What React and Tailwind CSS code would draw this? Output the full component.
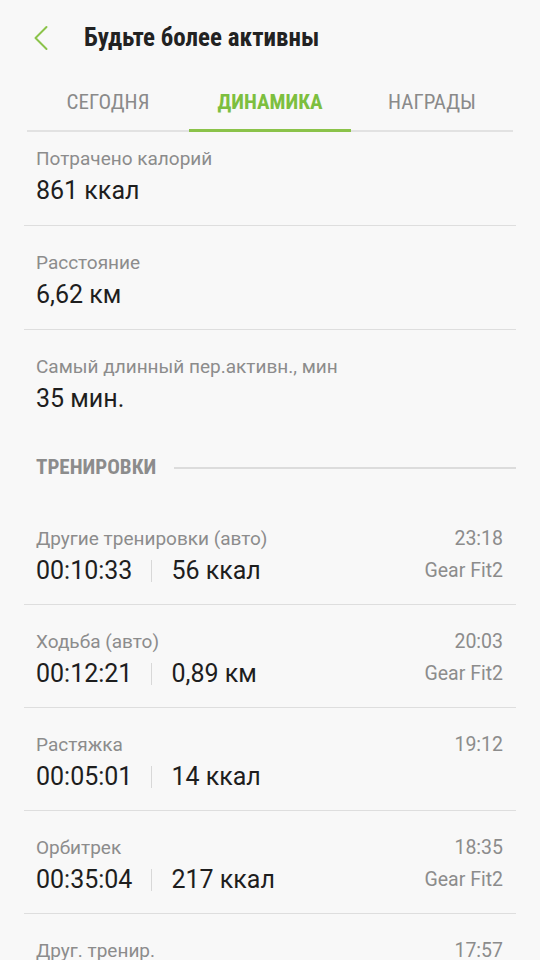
import { ChevronLeft } from 'lucide-react';

const stats = [
  { label: 'Потрачено калорий', value: '861 ккал' },
  { label: 'Расстояние', value: '6,62 км' },
  { label: 'Самый длинный пер.активн., мин', value: '35 мин.' },
];

// last entry is cut by the screen edge, only its first line shows
const workouts = [
  { name: 'Другие тренировки (авто)', time: '23:18', duration: '00:10:33', amount: '56 ккал', device: 'Gear Fit2' },
  { name: 'Ходьба (авто)', time: '20:03', duration: '00:12:21', amount: '0,89 км', device: 'Gear Fit2' },
  { name: 'Растяжка', time: '19:12', duration: '00:05:01', amount: '14 ккал', device: '' },
  { name: 'Орбитрек', time: '18:35', duration: '00:35:04', amount: '217 ккал', device: 'Gear Fit2' },
  { name: 'Друг. тренир.', time: '17:57' },
];

function StatRow({ stat, first, last }) {
  return (
    <div
      className={`mx-6 pl-3 pb-[19px] ${first ? 'pt-[14px]' : 'pt-[24px]'} ${last ? '' : 'border-b border-[#dedede]'}`}
    >
      <div className="text-[19px] leading-[26px] text-[#8c8c8c]">{stat.label}</div>
      <div className="mt-[4px] text-[25px] leading-[30px] text-[#1e1e1e]">{stat.value}</div>
    </div>
  );
}

function WorkoutRow({ w }) {
  return (
    <div className="mx-6 h-[103px] shrink-0 border-b border-[#dedede] pl-3 pr-[13px] pt-[24px] flex justify-between">
      <div>
        <div className="text-[19px] leading-[26px] text-[#8c8c8c]">{w.name}</div>
        {w.duration && (
          <div className="mt-[4px] flex items-center text-[25px] leading-[30px] text-[#1e1e1e]">
            <span>{w.duration}</span>
            <span className="mx-[19px] h-[22px] w-px bg-[#d8d8d8]" />
            <span>{w.amount}</span>
          </div>
        )}
      </div>
      <div className="text-right text-[19.5px] text-[#8c8c8c]">
        <div className="leading-[26px]">{w.time}</div>
        {w.device && <div className="mt-[4px] leading-[30px]">{w.device}</div>}
      </div>
    </div>
  );
}

export default function App() {
  return (
    <div className="w-[540px] h-[960px] overflow-hidden bg-[#f8f8f8] font-['Roboto',sans-serif]">
      <div className="h-[76px] flex items-center">
        <ChevronLeft className="ml-[19px] w-[44px] h-[44px] text-[#8bc34a]" strokeWidth={1.1} />
        <h1 className="ml-[21px] text-[25px] font-bold text-[#222] font-['Roboto_Condensed','Liberation_Sans_Narrow','Roboto',sans-serif]">
          Будьте более активны
        </h1>
      </div>
      <div className="mx-[27px] grid grid-cols-3 h-[56px] border-b-2 border-[#e2e2e2] text-[21px] font-['Roboto_Condensed','Liberation_Sans_Narrow','Roboto',sans-serif]">
        <div className="flex items-center justify-center text-[#8a8a8a]">СЕГОДНЯ</div>
        <div className="relative flex items-center justify-center font-bold text-[#7dbf3f]">
          ДИНАМИКА
          <span className="absolute left-0 right-0 -bottom-[2px] h-[3px] bg-[#8bc34a]" />
        </div>
        <div className="flex items-center justify-center text-[#8a8a8a]">НАГРАДЫ</div>
      </div>
      {stats.map((s, i) => (
        <StatRow key={s.label} stat={s} first={i === 0} last={i === stats.length - 1} />
      ))}
      <div className="mx-6 h-[69px] pl-3 flex items-center gap-[18px]">
        <span className="text-[21px] font-bold text-[#8c8c8c] font-['Roboto_Condensed','Liberation_Sans_Narrow','Roboto',sans-serif]">
          ТРЕНИРОВКИ
        </span>
        <span className="flex-1 h-[2px] bg-[#dcdcdc]" />
      </div>
      {workouts.map((w) => (
        <WorkoutRow key={w.name} w={w} />
      ))}
    </div>
  );
}
